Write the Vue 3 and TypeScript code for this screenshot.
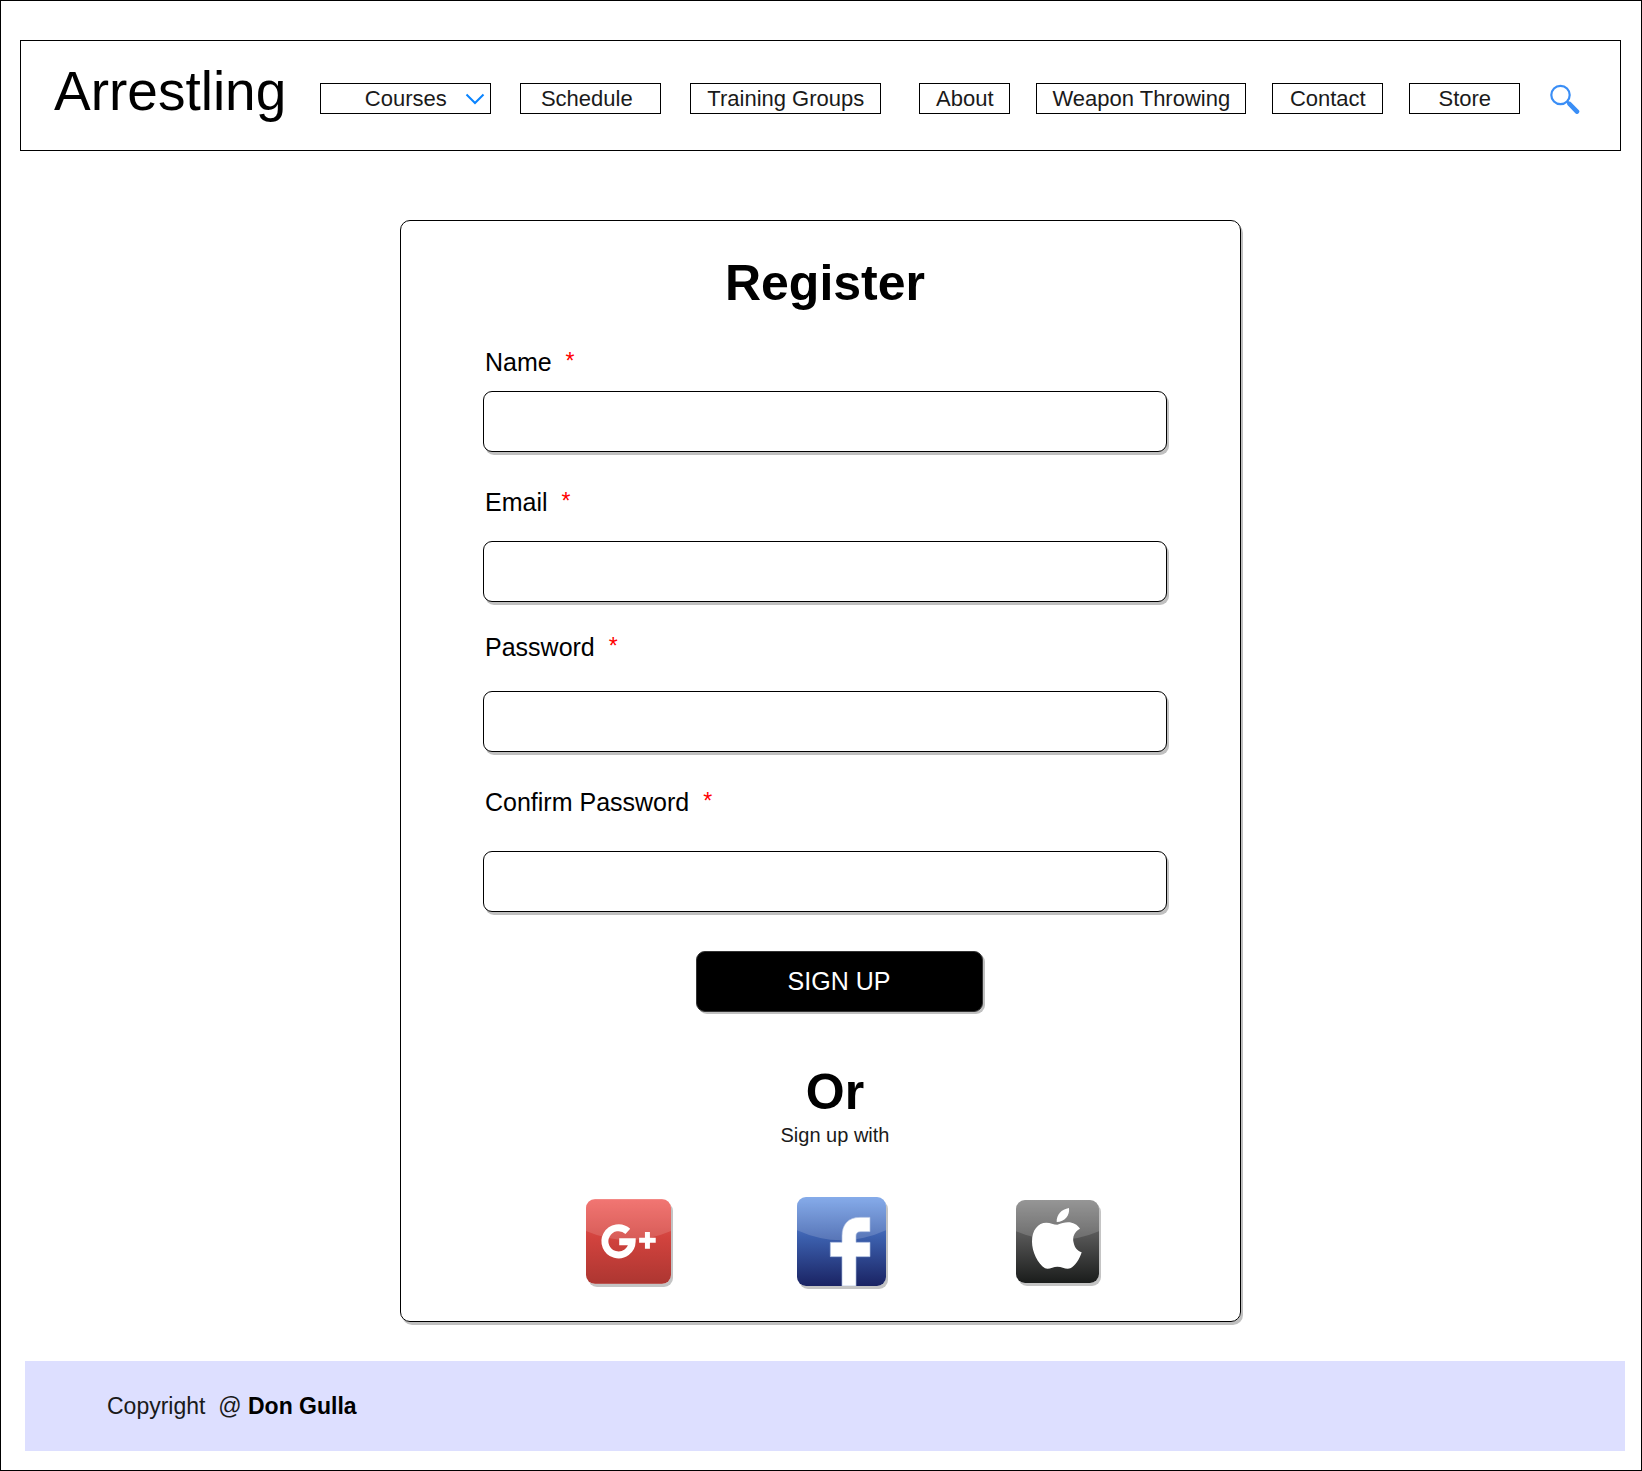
<script setup lang="ts">
import { reactive } from 'vue'

interface NavItem {
  label: string
  size: string
}

interface Field {
  id: 'name' | 'email' | 'password' | 'confirm'
  label: string
  type: string
}

const mainNav: NavItem[] = [
  { label: 'Schedule', size: 'schedule' },
  { label: 'Training Groups', size: 'training' },
]

const moreNav: NavItem[] = [
  { label: 'About', size: 'about' },
  { label: 'Weapon Throwing', size: 'weapon' },
  { label: 'Contact', size: 'short' },
  { label: 'Store', size: 'short' },
]

const fields: Field[] = [
  { id: 'name', label: 'Name', type: 'text' },
  { id: 'email', label: 'Email', type: 'email' },
  { id: 'password', label: 'Password', type: 'password' },
  { id: 'confirm', label: 'Confirm Password', type: 'password' },
]

const form = reactive({ name: '', email: '', password: '', confirm: '' })
</script>

<template>
  <div class="page">
    <header class="header">
      <h1 class="brand">Arrestling</h1>
      <nav class="nav" aria-label="Main">
        <div class="group">
          <div class="courses">
            <select class="box courses-select" aria-label="Courses">
              <option>Courses</option>
            </select>
            <svg class="chevron" width="20" height="12" viewBox="0 0 20 12" aria-hidden="true">
              <path d="M1.5 1.5 L10 10 L18.5 1.5" fill="none" stroke="#0a84ff" stroke-width="2" />
            </svg>
          </div>
          <a v-for="item in mainNav" :key="item.label" href="#" class="box" :class="item.size">{{ item.label }}</a>
        </div>
        <div class="group more">
          <a v-for="item in moreNav" :key="item.label" href="#" class="box" :class="item.size">{{ item.label }}</a>
        </div>
        <button type="button" class="search" aria-label="Search">
          <svg width="30" height="31" viewBox="0 0 30 31" aria-hidden="true">
            <circle cx="10.5" cy="12" r="9.2" fill="none" stroke="#3a8ef6" stroke-width="2.2" />
            <path d="M17 18.5 L20 21.5" stroke="#3a8ef6" stroke-width="2.6" />
            <path d="M19.6 21 L27 28.6" stroke="#3a8ef6" stroke-width="4.6" stroke-linecap="round" />
          </svg>
        </button>
      </nav>
    </header>

    <main class="card">
      <form @submit.prevent>
        <h2 class="heading">Register</h2>
        <div class="fields">
          <div v-for="field in fields" :key="field.id" class="field" :class="field.id">
            <label :for="field.id">{{ field.label }}&nbsp;&nbsp;<span class="required">*</span></label>
            <input :id="field.id" v-model="form[field.id]" :type="field.type" class="input" required />
          </div>
        </div>
        <div class="actions">
          <button type="submit" class="submit">SIGN UP</button>
        </div>
      </form>

      <section class="alternative">
        <h2 class="heading">Or</h2>
        <p class="hint">Sign up with</p>
      </section>

      <div class="socials">
        <button type="button" class="social" aria-label="Google Plus">
          <svg width="85" height="85" viewBox="50 54 256 255" aria-hidden="true">
            <defs>
              <linearGradient id="g-base" x1="0" y1="0" x2="0" y2="1">
                <stop offset="0" stop-color="#f0605c" />
                <stop offset="0.45" stop-color="#d2433e" />
                <stop offset="1" stop-color="#ad3631" />
              </linearGradient>
            </defs>
            <rect x="50" y="54" width="256" height="255" fill="url(#g-base)" />
            <path d="M50 54 H306 V150 Q178 205 50 150 Z" fill="#fff" fill-opacity="0.14" />
            <path d="M176 151 A41 41 0 1 0 189 182 H150" fill="none" stroke="#fff" stroke-width="21" />
            <path d="M210 178 H260 M235 153 V203" stroke="#fff" stroke-width="15" />
          </svg>
        </button>
        <button type="button" class="social facebook" aria-label="Facebook">
          <svg width="89" height="89" viewBox="51 48 267 267" aria-hidden="true">
            <defs>
              <linearGradient id="f-base" x1="0" y1="0" x2="0" y2="1">
                <stop offset="0" stop-color="#6f9ce6" />
                <stop offset="0.45" stop-color="#3c60ae" />
                <stop offset="1" stop-color="#1a2363" />
              </linearGradient>
            </defs>
            <rect x="51" y="48" width="267" height="267" fill="url(#f-base)" />
            <path d="M51 48 H318 V148 Q185 208 51 148 Z" fill="#fff" fill-opacity="0.16" />
            <path
              d="M186 315 V227 H151 V184 H186 V165 C186 130 205 109 240 109 H270 V152 H242 C232 152 228 157 228 165 V184 H270 V227 H228 V315 Z"
              fill="#fff"
              stroke="#a9bbe0"
              stroke-width="2"
            />
          </svg>
        </button>
        <button type="button" class="social" aria-label="Apple">
          <svg width="83" height="83" viewBox="49 60 249 249" aria-hidden="true">
            <defs>
              <linearGradient id="a-base" x1="0" y1="0" x2="0" y2="1">
                <stop offset="0" stop-color="#828282" />
                <stop offset="0.45" stop-color="#545454" />
                <stop offset="1" stop-color="#1a1c1b" />
              </linearGradient>
            </defs>
            <rect x="49" y="60" width="249" height="249" fill="url(#a-base)" />
            <path d="M49 60 H298 V154 Q173 207 49 154 Z" fill="#fff" fill-opacity="0.16" />
            <path d="M171 126 C170 104 185 88 208 84 C211 106 195 126 171 126 Z" fill="#fff" />
            <path
              d="M173 134 C184 131 194 127 205 127 C220 127 233 134 241 146 C223 156 218 172 222 188 C225 203 234 213 246 217 C240 237 226 258 212 265 C199 270 188 260 173 260 C160 260 148 270 136 265 C114 250 97 215 97 185 C97 150 115 128 140 128 C152 128 162 134 173 134 Z"
              fill="#fff"
            />
          </svg>
        </button>
      </div>
    </main>

    <footer class="footer">
      <p class="copyright">Copyright&nbsp; @ <strong>Don Gulla</strong></p>
    </footer>
  </div>
</template>

<style>
body {
  margin: 0;
  background: #fff;
}
</style>

<style scoped>
.page {
  box-sizing: border-box;
  min-height: 100vh;
  padding: 39px 20px 19px 19px;
  border: 1px solid #000;
  font-family: "Liberation Sans", Arial, sans-serif;
  color: #000;
}

.header {
  display: flex;
  align-items: flex-start;
  gap: 34px;
  padding: 20px 24px 29px 33px;
  border: 1px solid #000;
}

.brand {
  margin: 0;
  font-size: 55px;
  font-weight: 400;
  line-height: 60px;
}

.nav {
  display: flex;
  flex-wrap: wrap;
  padding-top: 22px;
}

.group {
  display: flex;
  gap: 29px;
}

.more {
  gap: 26px;
  margin: 0 30px 0 38px;
}

.box {
  box-sizing: border-box;
  height: 31px;
  border: 1px solid #000;
  border-radius: 0;
  background: #fff;
  color: #1a1a1a;
  font-family: inherit;
  font-size: 22px;
  line-height: 29px;
  text-align: center;
  text-decoration: none;
  white-space: nowrap;
}

.courses {
  display: grid;
  align-items: center;
}

.courses-select {
  grid-area: 1 / 1;
  appearance: none;
  width: 171px;
  margin: 0;
  padding: 0;
  text-align-last: center;
}

.chevron {
  grid-area: 1 / 1;
  justify-self: end;
  margin-right: 6px;
  pointer-events: none;
}

.schedule {
  width: 141px;
  padding-right: 8px;
}

.training {
  width: 191px;
}

.about {
  width: 91px;
}

.weapon {
  width: 210px;
}

.short {
  width: 111px;
}

.search {
  display: flex;
  padding: 0;
  border: 0;
  background: none;
}

.card {
  box-sizing: border-box;
  max-width: 841px;
  margin: 69px auto 0;
  padding: 34px 73px 35px 82px;
  border: 1px solid #000;
  border-radius: 10px;
  box-shadow: 2px 3px #c0c0c0;
}

.heading {
  margin: 0;
  font-size: 50px;
  line-height: 56px;
  text-align: center;
}

.fields {
  padding-top: 1px;
}

.field {
  display: flex;
  flex-direction: column;
  margin-top: 35px;
  font-size: 25px;
  line-height: 30px;
}

.field label {
  padding-left: 2px;
}

.required {
  color: #f00;
  font-size: 23px;
  line-height: 20px;
  vertical-align: 2px;
}

.input {
  box-sizing: border-box;
  width: 100%;
  height: 61px;
  margin: 0;
  padding: 0 16px;
  border: 1px solid #000;
  border-radius: 9px;
  background: #fff;
  box-shadow: 2px 3px #c0c0c0;
  font: inherit;
}

.name {
  gap: 14px;
}

.email {
  gap: 24px;
}

.password {
  gap: 29px;
  margin-top: 30px;
}

.confirm {
  gap: 34px;
}

.actions {
  display: flex;
  justify-content: center;
  padding: 39px 0 0 28px;
}

.submit {
  width: 287px;
  height: 61px;
  padding: 0;
  border: 1px solid #333;
  border-radius: 9px;
  background: #000;
  box-shadow: 2px 2px #c0c0c0;
  color: #fff;
  font-family: inherit;
  font-size: 25px;
}

.alternative {
  padding: 52px 0 50px 20px;
  text-align: center;
}

.hint {
  margin: 3px 0 0;
  color: #1a1a1a;
  font-size: 20px;
  line-height: 24px;
}

.socials {
  display: flex;
  align-items: center;
  padding-left: 103px;
}

.social {
  display: flex;
  padding: 0;
  border: 0;
  border-radius: 9px;
  background: none;
  box-shadow: 2px 3px #c4c4c4;
}

.social svg {
  border-radius: 9px;
}

.facebook {
  margin: 0 130px 0 126px;
}

.footer {
  margin: 39px -4px 0 5px;
  padding: 32px 82px;
  background: #dddfff;
}

.copyright {
  margin: 0;
  color: #1a1a1a;
  font-size: 23px;
  line-height: 26px;
}

.copyright strong {
  color: #000;
}
</style>
